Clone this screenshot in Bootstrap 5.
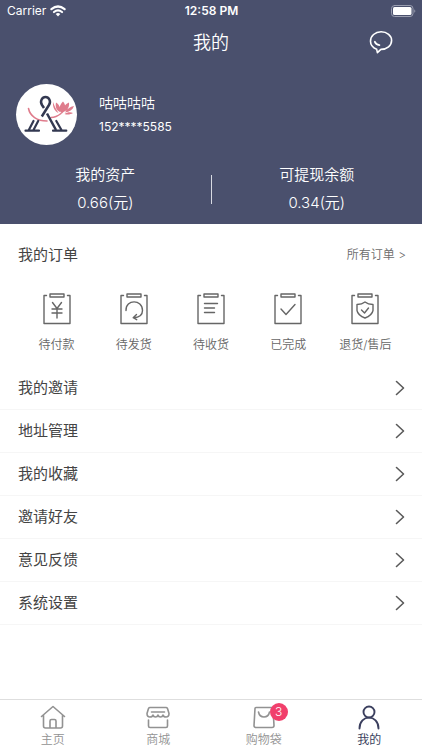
<!DOCTYPE html>
<html lang="zh-CN">
<head>
<meta charset="utf-8">
<meta name="viewport" content="width=device-width, initial-scale=1">
<title>我的</title>
<link href="https://cdn.jsdelivr.net/npm/bootstrap@5.3.0/dist/css/bootstrap.min.css" rel="stylesheet">
<style>
body{font-family:Inter,"Noto Sans CJK SC",sans-serif;font-size:15px;line-height:20px;color:#444;background:#fff}
svg{display:block;fill:none;stroke:currentColor;stroke-linecap:round;stroke-linejoin:round}
a{color:inherit;text-decoration:none}
.hero{background:#4a506d;color:#fff;height:224px}
.thin{font-weight:350}
.status{display:grid;grid-template-columns:1fr auto 1fr;height:22px;padding:0 6px 0 7px;font-size:12px}
.titlebar{display:grid;grid-template-columns:1fr auto 1fr;height:40px;padding:0 29px}
.titlebar h1{font-size:18px;line-height:24px;font-weight:350;padding-top:2px}
.titlebar button,.titlebar button:hover{color:#fff}
.profile{padding:22px 16px 0;gap:22px}
.avatar{width:61px;height:61px}
.nick{font-size:14px;margin-bottom:4px;font-weight:350;padding-top:1px}
.phone{font-size:12px;font-weight:400}
.assets{margin-top:20px}
.asset-amount{margin-top:8px}
.divider-line{width:1px;height:29px;background:#d8dae2}
.section-head{height:60px;padding:1px 16px 0 18px}
.section-head h2{font-size:15px;line-height:20px;font-weight:400}
.note{font-size:12px;color:#6c6c6c;font-weight:350}
.orders{height:83px;padding:9px 18px 0}
.orders a{gap:10px;color:#666}
.orders span{font-size:12px;font-weight:350}
.menu-row{height:43px;padding:0 17px 0 18px;border:0;border-bottom:1px solid #f6f6f6;font-size:15px;color:#444;background:#fff}
.menu-row svg{color:#5a5a5a}
.tabs{height:51px;border-top:1px solid #dedede;background:#fff}
.tabs a{padding-top:4px;font-size:12px;color:#929292;font-weight:350}
.tabs a.current{color:#3b3f5e;font-weight:400}
.count{top:-1px;left:19px;width:18px;height:18px;font-size:12px;line-height:18px;background:#f13f6c;color:#fff}
</style>
<script src="https://cdn.jsdelivr.net/npm/bootstrap@5.3.0/dist/js/bootstrap.bundle.min.js"></script>
</head>
<body class="d-flex flex-column min-vh-100">
<svg width="0" height="0" class="position-absolute" aria-hidden="true">
  <symbol id="board" viewBox="0 0 28 32"><path d="M3.500 2.500H1v28h26v-28h-2.500M7 1h14v3H7z"/></symbol>
  <symbol id="next" viewBox="0 0 10 16"><path d="M1.500 1.500 8.500 8l-7 6.500"/></symbol>
</svg>
<header class="hero">
  <div class="status align-items-center">
    <div class="d-flex align-items-center gap-1"><span>Carrier</span>
      <svg width="16" height="12" viewBox="0 0 16 12" stroke-width="2.200" aria-hidden="true"><path d="M1.400 4.200Q8-1.200 14.600 4.200M4 7Q8 3.800 12 7"/><path d="M5.700 8.900Q8 7.200 10.300 8.900L8 11.400z" fill="#fff" stroke="none"/></svg>
    </div>
    <span class="fw-semibold">12:58 PM</span>
    <svg class="ms-auto" width="25" height="12" viewBox="0 0 25 12" aria-label="电量"><rect x=".5" y=".5" width="21.500" height="11" rx="3" stroke="#9a9eb0"/><rect x="2" y="2" width="18.500" height="8" rx="1.500" fill="#fff" stroke="none"/><path d="M23.300 4.200q2 1.800 0 3.600z" fill="#9a9eb0" stroke="none"/></svg>
  </div>
  <div class="titlebar align-items-center">
    <span></span><h1 class="m-0">我的</h1>
    <button class="btn p-0 border-0 ms-auto" type="button" aria-label="消息"><svg width="24" height="24" viewBox="0 0 24 24" stroke-width="1.600"><path d="M7.700 19.300C3.800 17.700 1.500 14.800 1.500 11.300 1.500 5.900 6.100 1.800 12.100 1.800S22.600 5.600 22.600 10.500c0 5-4.600 8.900-10.700 8.900l-3.500 3.300z"/><path d="M5.800 11.800q1 2.900 4.600 3.300" stroke-width="1.800"/></svg></button>
  </div>
  <div class="profile d-flex align-items-center">
    <div class="avatar rounded-circle bg-white flex-shrink-0">
      <svg width="61" height="61" viewBox="0 0 61 61" aria-label="头像">
        <path d="M12.500 24.500C14 32 21 37 31 37M35 33.500q5 0 10-4" stroke="#df7c8c" stroke-width="1.600"/>
        <g fill="#df7c8c" stroke="none"><path d="M46 29.500c-4-3-3-8 1-12 3.500 4 3 9-1 12zM47.500 28c-.5-4 1.500-8 5.500-9.500.5 5-1.500 8-5.500 9.500zM44 28c-3.500-1.500-5-5-4-9.500 3 1.500 4.500 5 4 9.500zM49 28.500c2-3.500 5-6 9-6.500-1.500 4-4.500 6-9 6.500zM42.500 29c-4-2-6-6-5.500-11 1.500 4 3 7.500 5.500 11zM48.500 30c3-2 6-2 8.500-1-2.500 1.500-5.500 2-8.500 1z"/></g>
        <g stroke="#333951" stroke-width="2.500"><path d="M25.800 32.500L33 21c2.500-4-.3-8-3.500-8s-6 4-3.500 8l2 3M31 29.500L40 46" stroke-linecap="butt"/><path d="M17.500 37l-4.700 9M22.200 37l-4.700 9M9.500 46.700h13.500M40.300 37l5.200 9M37 46.700h13.300" stroke-width="2.200"/></g>
      </svg>
    </div>
    <div><div class="nick">咕咕咕咕</div><div class="phone">152****5585</div></div>
  </div>
  <div class="assets d-flex align-items-center text-center">
    <div class="flex-fill w-50"><div class="thin">我的资产</div><div class="asset-amount thin">0.66(元)</div></div>
    <div class="divider-line flex-shrink-0"></div>
    <div class="flex-fill w-50"><div class="thin">可提现余额</div><div class="asset-amount thin">0.34(元)</div></div>
  </div>
</header>
<main class="flex-grow-1">
  <section>
    <div class="section-head d-flex align-items-center justify-content-between"><h2 class="m-0">我的订单</h2><a class="note" href="#orders">所有订单 &gt;</a></div>
    <div class="orders row row-cols-5 g-0" id="orders">
      <a class="col d-flex flex-column align-items-center" href="#pay"><svg width="28" height="32" viewBox="0 0 28 32" stroke-width="1.400"><use href="#board"/><path d="M9.500 9.500l4.500 6 4.500-6M14 15.500V25M9 16h10M9 20h10"/></svg><span>待付款</span></a>
      <a class="col d-flex flex-column align-items-center" href="#ship"><svg width="28" height="32" viewBox="0 0 28 32" stroke-width="1.400"><use href="#board"/><path d="M6 17.500C5.500 6 22.500 6 22.500 17.500c0 4.500-3.500 7-9 7.200M16.500 21.500l-3.300 3.200 3.500 2"/></svg><span>待发货</span></a>
      <a class="col d-flex flex-column align-items-center" href="#receive"><svg width="28" height="32" viewBox="0 0 28 32" stroke-width="1.400"><use href="#board"/><path d="M7.500 10.500h13M7.500 15h10M7.500 19.500h10"/></svg><span>待收货</span></a>
      <a class="col d-flex flex-column align-items-center" href="#done"><svg width="28" height="32" viewBox="0 0 28 32" stroke-width="1.400"><use href="#board"/><path d="M7 16l5 5.500 9-10"/></svg><span>已完成</span></a>
      <a class="col d-flex flex-column align-items-center" href="#return"><svg width="28" height="32" viewBox="0 0 28 32" stroke-width="1.400"><use href="#board"/><path d="M14 9q3 2.500 8 2.500v6q-1 5-8 7.500-7-2.500-8-7.500v-6q5 0 8-2.500zM10.500 17l3 3 4-5"/></svg><span>退货/售后</span></a>
    </div>
  </section>
  <nav aria-label="菜单">
    <button type="button" class="menu-row w-100 d-flex align-items-center justify-content-between"><span>我的邀请</span><svg width="10" height="16" stroke-width="1.600"><use href="#next"/></svg></button>
    <button type="button" class="menu-row w-100 d-flex align-items-center justify-content-between"><span>地址管理</span><svg width="10" height="16" stroke-width="1.600"><use href="#next"/></svg></button>
    <button type="button" class="menu-row w-100 d-flex align-items-center justify-content-between"><span>我的收藏</span><svg width="10" height="16" stroke-width="1.600"><use href="#next"/></svg></button>
    <button type="button" class="menu-row w-100 d-flex align-items-center justify-content-between"><span>邀请好友</span><svg width="10" height="16" stroke-width="1.600"><use href="#next"/></svg></button>
    <button type="button" class="menu-row w-100 d-flex align-items-center justify-content-between"><span>意见反馈</span><svg width="10" height="16" stroke-width="1.600"><use href="#next"/></svg></button>
    <button type="button" class="menu-row w-100 d-flex align-items-center justify-content-between"><span>系统设置</span><svg width="10" height="16" stroke-width="1.600"><use href="#next"/></svg></button>
  </nav>
</main>
<footer class="tabs sticky-bottom row row-cols-4 g-0">
  <a class="col d-flex flex-column align-items-center" href="#home"><svg width="26" height="26" viewBox="0 0 26 26" stroke-width="1.600"><path d="M1.500 12.500 13 2.500l11.500 10M3.500 11v11q0 2 2 2h15q2 0 2-2V11M10 24v-7q0-1.500 1.500-1.500h3q1.500 0 1.500 1.500v7"/></svg><span>主页</span></a>
  <a class="col d-flex flex-column align-items-center" href="#mall"><svg width="26" height="26" viewBox="0 0 26 26" stroke-width="1.600"><path d="M5 3.500h16q1 0 1.500 1l1.500 5q0 3.500-3 3.500-2.500 0-3-2-.5 2-2.500 2T13 11q-.5 2-2.500 2T8 11q-.5 2-3 2-3 0-3-3.500l1.500-5q.5-1 1.500-1zM6.500 8h13M3.500 16v6q0 1.500 1.500 1.500h16q1.500 0 1.500-1.500v-6"/></svg><span>商城</span></a>
  <a class="col d-flex flex-column align-items-center" href="#bag"><div class="position-relative"><svg width="26" height="26" viewBox="0 0 26 26" stroke-width="1.600"><path d="M5 3.500h16q1 0 1 1l1 17q0 2-2 2H5q-2 0-2-2l1-17q0-1 1-1zM7.500 8q1 5 5.500 5t5.500-5"/></svg><span class="count position-absolute rounded-circle text-center">3</span></div><span>购物袋</span></a>
  <a class="col d-flex flex-column align-items-center current" href="#me" aria-current="page"><svg width="26" height="26" viewBox="0 0 26 26" stroke-width="1.900"><circle cx="13" cy="8" r="5.500"/><path d="M3.500 24.500C3.500 10 22.500 10 22.500 24.500"/></svg><span>我的</span></a>
</footer>
</body>
</html>
